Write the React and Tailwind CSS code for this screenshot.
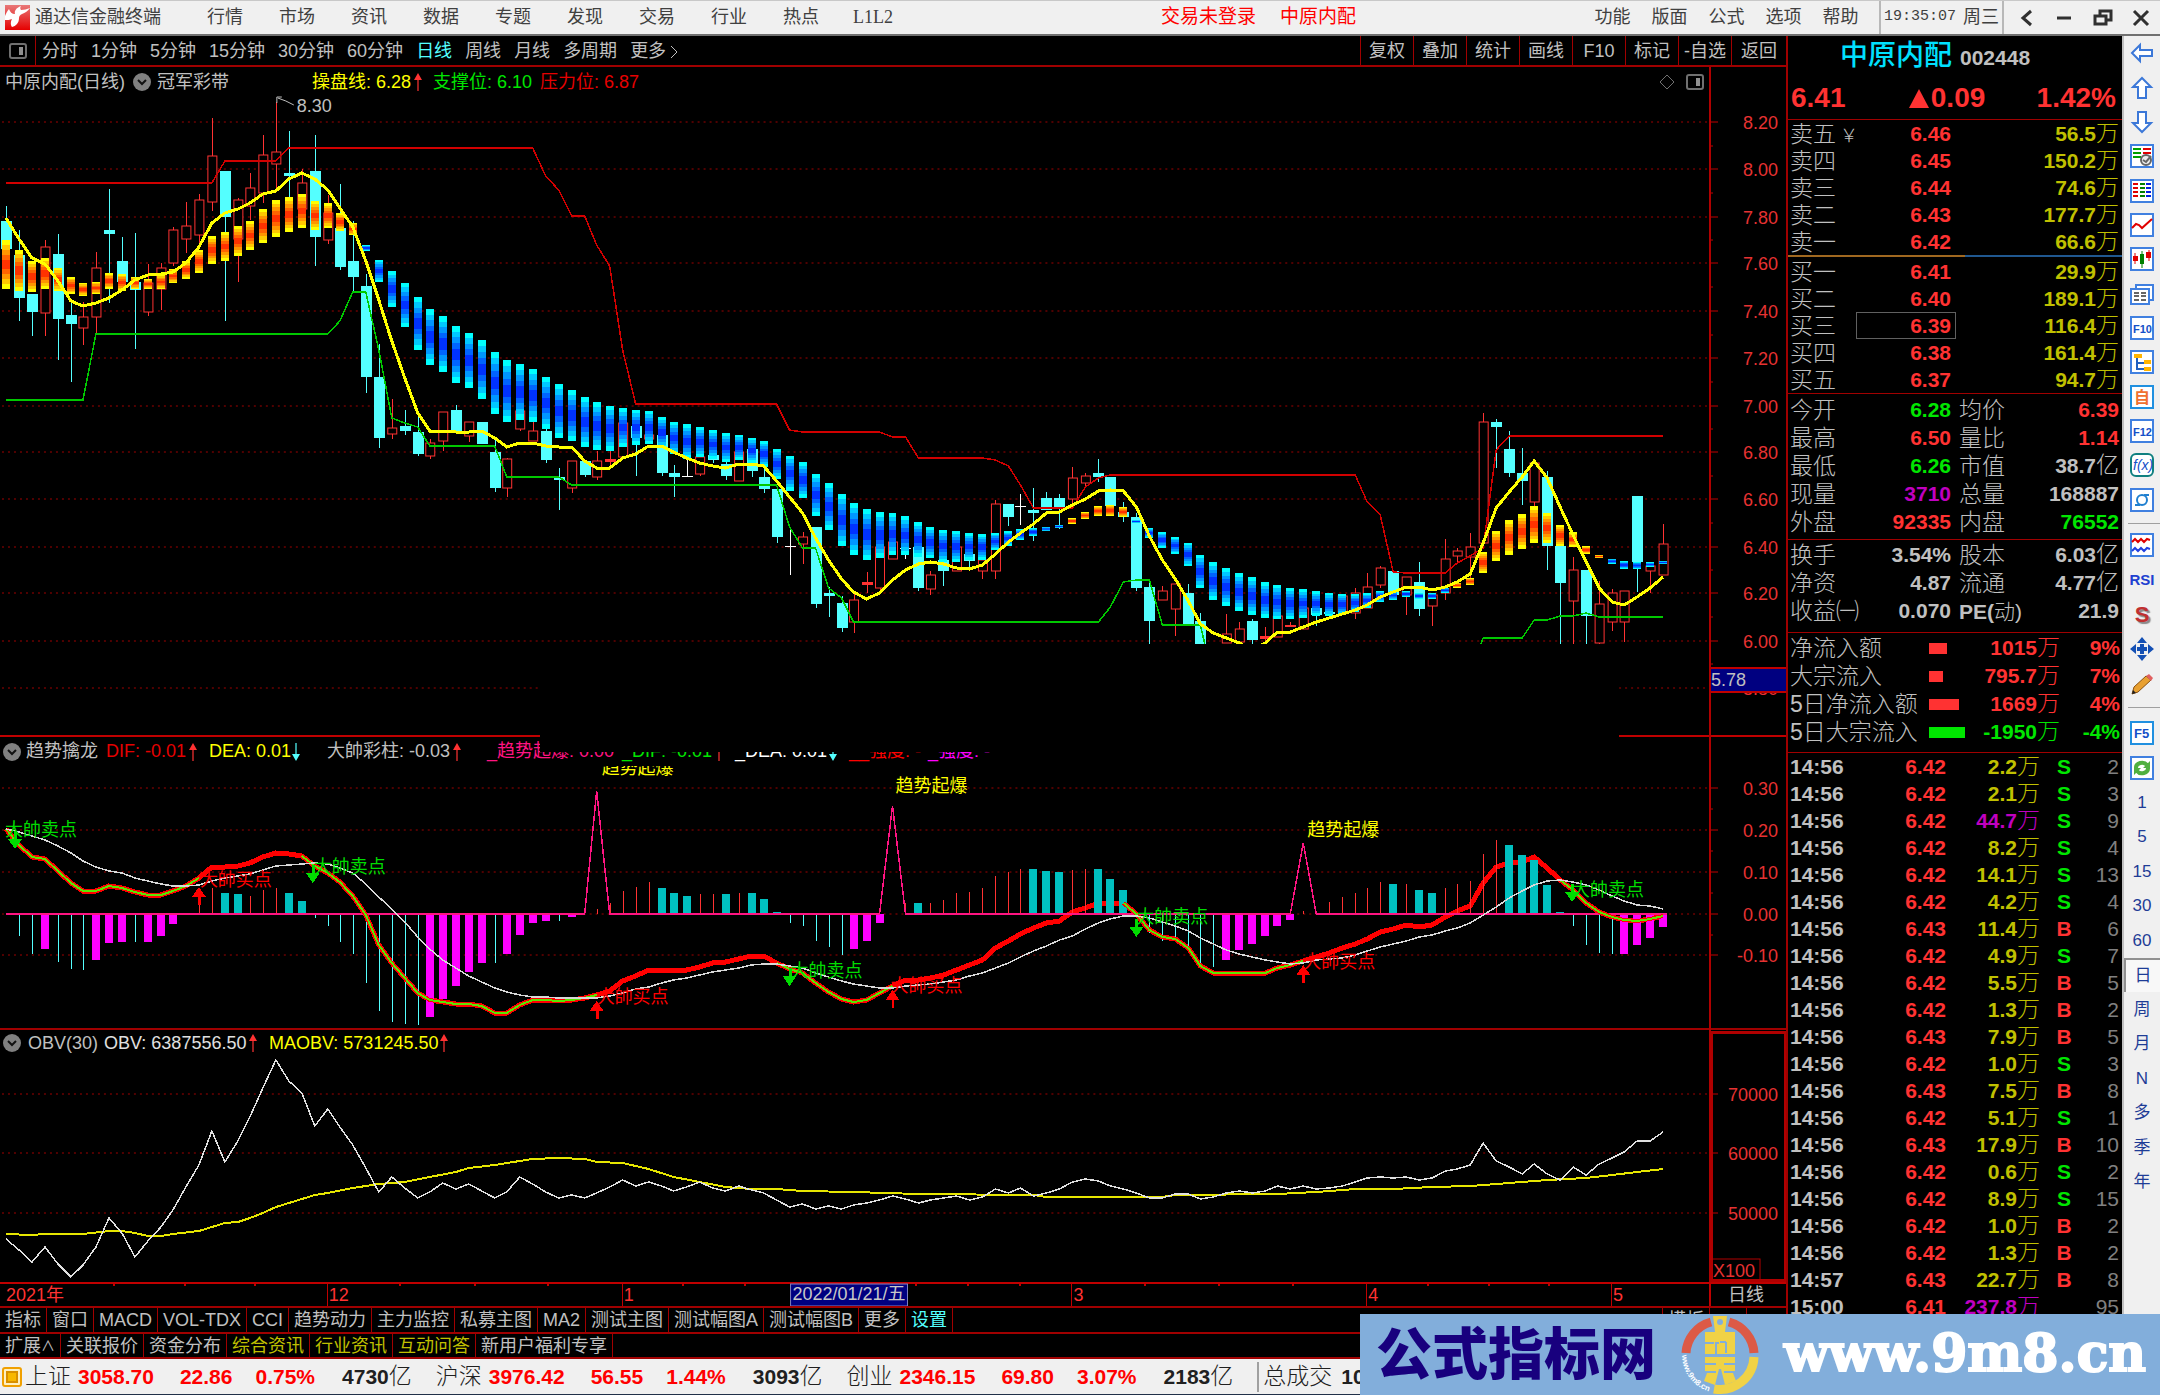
import React, { useState } from 'react';
import clsx from 'clsx';

const STEP = 12.85;
const X0 = 6.3;
const xAt = (i) => Math.round(X0 + STEP * i);

// [kind, high, bodyTop, bodyBottom, low]  r = up, f = up filled, c = down, w = flat
const CANDLES = [
  ['c', 206, 221, 249, 249], ['c', 230, 255, 298, 321], ['c', 294, 294, 312, 336], ['r', 240, 247, 313, 336],
  ['c', 234, 254, 319, 360], ['c', 303, 315, 324, 382], ['r', 302, 317, 328, 345], ['r', 252, 268, 317, 333],
  ['c', 189, 230, 234, 303], ['c', 237, 261, 282, 282], ['c', 233, 282, 290, 349], ['r', 264, 283, 312, 316],
  ['r', 263, 268, 289, 310], ['r', 227, 230, 263, 266], ['r', 202, 226, 239, 253], ['r', 194, 200, 235, 247],
  ['r', 118, 156, 202, 211], ['c', 171, 171, 217, 321], ['r', 198, 200, 239, 282], ['r', 173, 188, 206, 220],
  ['r', 135, 155, 193, 203], ['r', 102, 152, 164, 190], ['c', 131, 173, 176, 197], ['r', 169, 183, 209, 209],
  ['c', 135, 171, 237, 266], ['r', 195, 213, 240, 244], ['c', 184, 228, 267, 270], ['c', 221, 261, 277, 292],
  ['c', 274, 286, 377, 393], ['c', 344, 377, 438, 448], ['r', 399, 428, 434, 439], ['c', 410, 426, 431, 435],
  ['c', 415, 432, 454, 456], ['r', 439, 443, 456, 459], ['r', 412, 412, 441, 451], ['c', 405, 410, 431, 431],
  ['r', 422, 422, 436, 442], ['c', 422, 422, 444, 444], ['c', 437, 452, 488, 492], ['r', 458, 459, 488, 497],
  ['r', 411, 411, 429, 431], ['r', 422, 431, 441, 441], ['c', 428, 431, 460, 463], ['c', 468, 477, 480, 510],
  ['r', 461, 461, 488, 493], ['c', 461, 461, 475, 477], ['r', 451, 461, 477, 480], ['f', 451, 459, 462, 465],
  ['r', 423, 423, 457, 457], ['c', 426, 426, 438, 476], ['r', 435, 435, 439, 439], ['c', 435, 435, 473, 476],
  ['c', 465, 473, 477, 497], ['w', 460, 476, 477, 477], ['r', 457, 457, 474, 476], ['c', 452, 455, 460, 463],
  ['c', 462, 464, 476, 480], ['r', 452, 452, 481, 481], ['c', 449, 449, 471, 477], ['c', 462, 477, 489, 493],
  ['c', 489, 489, 537, 543], ['w', 527, 546, 547, 575], ['r', 532, 537, 544, 564], ['c', 527, 527, 604, 608],
  ['c', 587, 593, 596, 617], ['c', 596, 603, 628, 632], ['r', 593, 600, 622, 633], ['f', 572, 582, 585, 593],
  ['r', 547, 547, 588, 590], ['r', 542, 542, 559, 559], ['w', 547, 548, 549, 559], ['c', 547, 547, 588, 591],
  ['r', 571, 575, 589, 595], ['c', 560, 560, 571, 586], ['r', 547, 547, 571, 571], ['c', 554, 554, 561, 571],
  ['r', 560, 560, 571, 579], ['r', 500, 504, 571, 579], ['c', 504, 504, 517, 526], ['w', 494, 506, 507, 525],
  ['c', 488, 510, 513, 541], ['c', 492, 498, 510, 510], ['c', 494, 498, 508, 529], ['r', 467, 478, 499, 508],
  ['r', 473, 476, 483, 488], ['c', 459, 473, 477, 482], ['c', 477, 477, 506, 513], ['c', 502, 512, 517, 522],
  ['c', 513, 517, 588, 591], ['c', 582, 587, 621, 660], ['r', 586, 591, 600, 600], ['r', 584, 584, 609, 636],
  ['c', 584, 593, 625, 625], ['c', 613, 621, 680, 680], ['c', 660, 662, 680, 680], ['r', 614, 634, 643, 643],
  ['r', 622, 629, 642, 643], ['c', 619, 621, 640, 644], ['f', 627, 636, 639, 643], ['r', 616, 616, 637, 637],
  ['f', 622, 625, 627, 627], ['r', 608, 608, 629, 629], ['c', 608, 608, 615, 626], ['c', 608, 612, 614, 614],
  ['r', 594, 596, 612, 612], ['r', 588, 593, 613, 619], ['r', 573, 587, 608, 608], ['r', 566, 568, 585, 588],
  ['c', 571, 571, 595, 595], ['r', 577, 577, 595, 615], ['c', 562, 582, 609, 616], ['r', 593, 595, 606, 626],
  ['r', 539, 559, 593, 600], ['r', 548, 551, 556, 563], ['r', 533, 547, 557, 580], ['r', 413, 422, 543, 543],
  ['c', 419, 422, 427, 468], ['c', 431, 449, 473, 477], ['c', 448, 473, 481, 505], ['r', 460, 463, 502, 506],
  ['c', 471, 477, 546, 570], ['c', 537, 546, 583, 660], ['r', 557, 570, 601, 660], ['c', 570, 570, 616, 660],
  ['r', 581, 604, 643, 650], ['r', 589, 593, 622, 631], ['r', 591, 591, 622, 642], ['c', 496, 496, 562, 592],
  ['r', 562, 566, 571, 593], ['r', 524, 544, 575, 575],
];

// ribbon [top, bottom] for each day
const RIBBON = [
  [240, 289], [250, 291], [261, 292], [258, 289], [268, 291], [277, 294], [283, 296], [282, 294], [273, 289], [274, 291],
  [277, 289], [279, 289], [275, 289], [269, 283], [261, 279], [250, 273], [236, 264], [232, 261], [226, 256], [221, 250],
  [209, 243], [200, 237], [197, 232], [194, 228], [201, 230], [203, 228], [213, 231], [223, 235], [245, 251], [260, 282],
  [271, 307], [283, 327], [297, 350], [309, 365], [316, 372], [326, 383], [333, 388], [340, 399], [352, 414], [360, 422],
  [364, 420], [369, 422], [377, 429], [384, 438], [390, 441], [397, 447], [402, 450], [406, 451], [408, 447], [410, 445],
  [411, 444], [417, 448], [422, 454], [424, 459], [427, 457], [430, 459], [433, 462], [435, 460], [438, 463], [441, 467],
  [449, 479], [456, 491], [462, 498], [474, 516], [483, 530], [494, 546], [503, 555], [509, 560], [512, 558], [513, 555],
  [516, 555], [522, 557], [527, 558], [530, 562], [531, 562], [533, 560], [534, 560], [533, 550], [531, 546], [529, 540],
  [528, 536], [527, 531], [525, 528], [518, 524], [512, 519], [506, 516], [505, 516], [507, 517], [520, 523], [528, 538],
  [532, 548], [537, 554], [543, 566], [555, 588], [562, 600], [568, 606], [573, 611], [577, 615], [582, 618], [585, 619],
  [588, 619], [589, 618], [591, 616], [593, 616], [594, 615], [594, 612], [593, 608], [591, 602], [591, 600], [591, 597],
  [593, 599], [593, 599], [588, 593], [583, 588], [578, 585], [552, 573], [531, 561], [520, 555], [514, 549], [506, 543],
  [513, 543], [525, 546], [532, 547], [546, 554], [555, 558], [559, 564], [561, 569], [562, 569], [562, 567], [561, 564],
];
const isWarm = (i) => i <= 27 || (i >= 83 && i <= 87) || (i >= 113 && i <= 124);

const TRADE_LINE = [
  218, 239, 258, 264, 281, 301, 306, 303, 298, 290, 280, 275, 274, 272, 263, 247, 223, 213, 209, 203, 194, 191, 179, 173,
  179, 190, 208, 227, 261, 300, 341, 378, 413, 431, 431, 432, 432, 431, 438, 447, 443, 443, 446, 447, 447, 461, 468, 468,
  458, 454, 446, 446, 452, 458, 463, 466, 468, 464, 464, 466, 481, 497, 513, 538, 560, 579, 592, 599, 593, 580, 570, 564,
  562, 564, 568, 569, 565, 554, 542, 533, 524, 513, 512, 505, 499, 491, 490, 491, 507, 536, 560, 579, 601, 624, 633, 638,
  643, 650, 643, 632, 632, 627, 622, 618, 614, 610, 605, 597, 592, 587, 587, 590, 587, 582, 574, 543, 508, 492, 477, 461,
  478, 507, 535, 562, 588, 602, 605, 597, 588, 577,
];
// sparse lines: [day, y]
const PRESSURE = [
  [0, 183], [16, 183], [17, 161], [21, 161], [22, 148], [41, 148], [42, 176], [43, 190], [44, 216], [45, 216], [46, 245],
  [47, 266], [48, 350], [49, 404], [60, 404], [61, 430], [62, 432], [68, 432], [69, 437], [70, 437], [71, 458], [76, 458],
  [77, 460], [78, 466], [79, 485], [80, 508], [83, 508], [84, 487], [85, 478], [86, 475], [105, 475], [106, 502],
  [107, 515], [108, 572], [109, 573], [112, 573], [113, 563], [114, 556], [115, 548], [116, 450], [117, 436], [129, 436],
];
const SUPPORT = [
  [0, 400], [6, 400], [7, 334], [25, 334], [26, 321], [27, 292], [28, 292], [29, 350], [30, 418], [31, 423], [32, 427],
  [33, 446], [38, 446], [39, 477], [43, 477], [44, 485], [60, 485], [61, 527], [62, 548], [63, 548], [64, 588], [65, 598],
  [66, 622], [85, 622], [86, 607], [87, 582], [88, 580], [89, 580], [90, 625], [93, 625], [94, 680], [114, 670],
  [115, 638], [118, 638], [119, 620], [120, 620], [121, 616], [122, 616], [123, 613], [124, 617], [129, 617],
];

// histogram: c thin cyan, t teal bar, r thin red, m magenta bar
const HIST = 'c936 c954 m949 c962 c969 c970 m960 m943 m942 c942 m942 m936 m924 r914 r900 r888 t893 t894 r896 r890 r888 t893 t901 c918 c926 c942 c954 c983 c1011 c1022 c1024 c1025 m1017 m999 m986 m972 m963 c963 m954 m935 m923 m921 c921 m917 r914 r909 r903 r891 r887 r882 t888 t893 t896 r894 r894 t894 r893 t893 t899 t912 c923 c926 c941 c947 c955 m949 m941 m923 r909 r903 t903 r903 r900 r893 r892 r888 r876 r872 r869 t869 t871 t872 r870 r869 t869 t879 t890 c914 c933 c941 c942 c948 c965 c967 m960 m950 m944 m936 m926 m920 r911 r914 r902 r897 r893 r888 r882 t884 r884 t890 t893 r888 r884 r881 r854 r840 t845 t855 t860 t885 t912 c926 c945 c953 c954 m954 m945 m938 m927'
  .split(' ')
  .map((s) => [s[0], Number(s.slice(1))]);

const DEA = [
  829, 832, 836, 840, 846, 853, 861, 867, 871, 873, 878, 881, 884, 886, 886, 885, 881, 878, 876, 874, 870, 866, 865, 864,
  863, 864, 868, 873, 884, 897, 909, 922, 937, 949, 960, 968, 976, 982, 988, 992, 995, 997, 997, 998, 998, 998, 998, 996,
  993, 989, 987, 983, 980, 978, 975, 972, 970, 968, 965, 964, 964, 966, 968, 973, 977, 981, 984, 986, 988, 988, 986, 985,
  984, 982, 980, 976, 973, 968, 963, 957, 951, 946, 940, 936, 929, 923, 919, 916, 916, 918, 922, 926, 931, 938, 944, 950,
  954, 957, 960, 962, 964, 963, 960, 959, 958, 955, 951, 947, 944, 941, 937, 935, 931, 928, 923, 915, 907, 898, 891, 885,
  881, 880, 882, 885, 890, 896, 901, 905, 906, 909,
];
const DIF = [
  829, 845, 857, 859, 871, 883, 891, 891, 886, 888, 892, 895, 895, 891, 886, 878, 867, 867, 866, 863, 857, 853, 854, 856,
  866, 873, 882, 896, 915, 945, 963, 978, 993, 1000, 1002, 1004, 1004, 1006, 1013, 1013, 1005, 1000, 1000, 1001, 1000, 998, 995, 991,
  981, 976, 970, 970, 970, 970, 967, 963, 962, 959, 956, 956, 963, 969, 973, 983, 992, 999, 1002, 1000, 993, 986, 980, 980,
  978, 975, 970, 965, 960, 948, 941, 934, 928, 923, 921, 912, 908, 903, 903, 903, 914, 930, 937, 939, 948, 966, 973, 973,
  973, 973, 973, 968, 965, 961, 957, 953, 948, 944, 939, 932, 929, 925, 927, 925, 917, 911, 906, 883, 867, 863, 862, 857,
  868, 880, 890, 903, 912, 917, 920, 921, 919, 916,
];
const WEAK = [[0, 15], [23, 46], [60, 69], [87, 101], [121, 129]];

const OBV = [
  1239, 1250, 1262, 1247, 1264, 1277, 1265, 1247, 1218, 1233, 1257, 1241, 1227, 1210, 1187, 1165, 1131, 1162, 1141, 1117,
  1088, 1060, 1081, 1093, 1126, 1109, 1127, 1145, 1168, 1192, 1177, 1188, 1198, 1192, 1183, 1189, 1184, 1191, 1198, 1192,
  1177, 1184, 1192, 1198, 1195, 1198, 1193, 1187, 1180, 1186, 1182, 1186, 1191, 1187, 1182, 1188, 1191, 1186, 1190, 1193,
  1200, 1207, 1204, 1209, 1206, 1209, 1205, 1203, 1200, 1196, 1199, 1203, 1200, 1198, 1196, 1200, 1197, 1189, 1193, 1188,
  1196, 1193, 1189, 1182, 1179, 1181, 1186, 1189, 1193, 1198, 1198, 1194, 1194, 1199, 1197, 1193, 1191, 1193, 1191, 1186,
  1189, 1186, 1189, 1188, 1186, 1182, 1178, 1177, 1178, 1177, 1180, 1178, 1171, 1169, 1165, 1143, 1161, 1167, 1174, 1164,
  1174, 1180, 1167, 1175, 1164, 1158, 1152, 1141, 1141, 1132,
];
const MAOBV = [
  [0, 1234], [2, 1235], [3, 1234], [6, 1234], [8, 1231], [9, 1231], [10, 1233], [11, 1236], [12, 1236], [13, 1234],
  [15, 1231], [16, 1227], [17, 1223], [18, 1222], [19, 1218], [20, 1213], [21, 1207], [22, 1203], [24, 1195], [25, 1193],
  [27, 1188], [29, 1184], [31, 1182], [33, 1177], [35, 1172], [36, 1168], [38, 1165], [40, 1161], [41, 1159], [43, 1158],
  [45, 1159], [46, 1162], [48, 1163], [50, 1169], [52, 1177], [54, 1182], [56, 1187], [58, 1189], [60, 1189], [62, 1191],
  [66, 1192], [71, 1194], [80, 1195], [81, 1197], [90, 1197], [91, 1195], [94, 1195], [96, 1194], [99, 1194], [102, 1192],
  [105, 1189], [108, 1189], [111, 1187], [114, 1186], [117, 1183], [120, 1180], [123, 1178], [125, 1175], [127, 1172],
  [129, 1169],
];

const dense = (ys, from = 0, to = ys.length - 1) =>
  ys.slice(from, to + 1).map((y, k) => `${xAt(from + k)},${y}`).join(' ');
const sparse = (pts) => pts.map(([i, y]) => `${xAt(i)},${y}`).join(' ');

const COLORS = { r: '#ff3232', f: '#ff3232', c: '#54ffff', w: '#ffffff', t: '#00c0c0', m: '#ff00ff' };

function Candle({ i, data }) {
  const [kind, high, top, bottom, low] = data;
  const x = xAt(i);
  const color = COLORS[kind];
  const hollow = kind === 'r';
  return (
    <g>
      <rect x={x} y={high} width="1" height={Math.max(low - high, 1)} fill={color} />
      {hollow ? (
        <rect x={x - 4} y={top} width="9" height={Math.max(bottom - top, 2)} fill="#000" stroke={color} />
      ) : (
        <rect x={x - 5} y={top} width="11" height={Math.max(bottom - top, 1)} fill={color} />
      )}
    </g>
  );
}

function RibbonGradient({ id, colors }) {
  const cuts = [0, 10, 20, 30, 40];
  const stops = [];
  cuts.forEach((c, k) => {
    stops.push([c, colors[k]], [k < 4 ? cuts[k + 1] : 60, colors[k]]);
  });
  for (let k = 3; k >= 0; k--) stops.push([90 - cuts[k], colors[k]], [100 - cuts[k], colors[k]]);
  return (
    <linearGradient id={id} x1="0" y1="0" x2="0" y2="1">
      {stops.map(([o, c], k) => (
        <stop key={k} offset={`${o}%`} stopColor={c} />
      ))}
    </linearGradient>
  );
}

function GridLine({ y, label, short }) {
  return (
    <g>
      {short ? (
        <path d={`M2 ${y}H540M1620 ${y}H1708`} stroke="#a00000" strokeDasharray="2 4" />
      ) : (
        <path d={`M2 ${y}H1708`} stroke="#a00000" strokeDasharray="2 4" />
      )}
      <path d={`M1711 ${y}H1719`} stroke="#c00000" />
      {label && (
        <text x="1779" y={y + 7} textAnchor="end" fill="#e63232" fontSize="18">{label}</text>
      )}
    </g>
  );
}

function MinorTicks({ ys }) {
  return <path d={ys.map((y) => `M1711 ${y}H1714`).join('')} stroke="#c00000" />;
}

function Chart({ top, height, grow, children, header }) {
  return (
    <div className={clsx('relative min-h-0', grow)}>
      <svg
        className="block h-full w-full"
        viewBox={`0 ${top} 1787 ${height}`}
        preserveAspectRatio="none"
        shapeRendering="crispEdges"
        fill="none"
      >
        {children}
        <path d={`M1710.5 ${top}V${top + height}`} stroke="#b00000" strokeWidth="2" />
      </svg>
      {header}
    </div>
  );
}

function Toggle() {
  return (
    <button className="flex size-[18px] items-center justify-center rounded-full bg-[#808080]" aria-label="指标菜单">
      <svg viewBox="0 0 10 10" className="size-2.5" fill="none" stroke="#111" strokeWidth="2">
        <path d="M1 3l4 4 4-4" />
      </svg>
    </button>
  );
}

function Trend({ down }) {
  return down ? (
    <svg viewBox="0 0 8 20" className="h-5 w-2" fill="#54ffff"><path d="M3.4 1h1.2v11H8L4 19 0 12h3.4z" /></svg>
  ) : (
    <svg viewBox="0 0 8 20" className="h-5 w-2" fill="#ff3232"><path d="M3.4 19h1.2V8H8L4 1 0 8h3.4z" /></svg>
  );
}

function PriceChart() {
  const levels = [122, 169, 217, 263, 311, 358, 406, 452, 499, 547, 593, 641];
  return (
    <Chart
      top={67}
      height={670}
      grow="flex-[670]"
      header={
        <>
          <div className="absolute inset-x-0 top-0 flex h-[30px] items-center pl-[5px]">
            <span className="w-[128px]">中原内配(日线)</span>
            <Toggle />
            <span className="ml-1.5 w-[155px]">冠军彩带</span>
            <span className="text-[#ffff00]">操盘线: 6.28</span>
            <span className="mx-[3px]"><Trend /></span>
            <span className="ml-2 text-[#00e600]">支撑位: 6.10</span>
            <span className="ml-2 text-[#e60000]">压力位: 6.87</span>
          </div>
          <div className="absolute top-1.5 right-[82px] flex items-center gap-2.5">
            <svg viewBox="0 0 18 18" className="size-[18px]" fill="none" stroke="#707070"><path d="M9 2l7 7-7 7-7-7z" /></svg>
            <PanelIcon />
          </div>
        </>
      }
    >
      <defs>
        <RibbonGradient id="warm" colors={['#ffff00', '#ffc800', '#ff9600', '#ff6400', '#ff3200']} />
        <RibbonGradient id="cool" colors={['#00ffff', '#00c8ff', '#0096ff', '#0064ff', '#0032ff']} />
        <clipPath id="price-clip"><rect x="0" y="67" width="1710" height="577" /></clipPath>
      </defs>
      {levels.map((y, k) => (
        <GridLine key={y} y={y} label={(8.2 - k * 0.2).toFixed(2)} />
      ))}
      <GridLine y={688} label="5.80" short />
      <MinorTicks ys={[146, 193, 240, 287, 335, 382, 429, 476, 523, 570, 617, 664]} />
      <g clipPath="url(#price-clip)">
        {CANDLES.map((c, i) => (
          <Candle key={i} i={i} data={c} />
        ))}
        {RIBBON.map(([a, b], i) => (
          <rect key={i} x={xAt(i) - 4} y={a} width="8" height={b - a} fill={isWarm(i) ? 'url(#warm)' : 'url(#cool)'} />
        ))}
        <polyline points={sparse(PRESSURE)} stroke="#d20000" strokeWidth="1.5" />
        <polyline points={sparse(SUPPORT)} stroke="#00c800" strokeWidth="1.5" />
        <polyline points={dense(TRADE_LINE)} stroke="#ffff00" strokeWidth="3" />
      </g>
      <path d="M277 103V97H282M278 98L286 101L294 105" stroke="#c0c0c0" />
      <text x="297" y="112" fill="#c0c0c0" fontSize="18">8.30</text>
      <rect x="1711" y="668" width="76" height="24" fill="#000080" />
      <path d="M1711 668H1787M1711 692H1787" stroke="#c00000" strokeWidth="2" />
      <text x="1712" y="686" fill="#c0c0c0" fontSize="18">5.78</text>
      <path d="M0 736H540M1620 736H1787" stroke="#c00000" strokeWidth="2" />
    </Chart>
  );
}

const SELL = [[5, 836, 15, 849], [314, 873, 313, 883], [791, 977, 790, 986], [1137, 923, 1137, 937], [1573, 896, 1573, 902]];
const BUY = [[200, 886, 199, 887], [597, 1003, 597, 1001], [891, 992, 893, 990], [1304, 968, 1304, 965]];

function TrendChart() {
  const grid = [[788, '0.30'], [830, '0.20'], [872, '0.10'], [914, '0.00'], [955, '-0.10']];
  const spikes = [[46, 791], [69, 806], [101, 843]];
  let base = `M${xAt(0)} 914`;
  spikes.forEach(([i, y]) => {
    base += `H${xAt(i - 1)}L${xAt(i)} ${y}L${xAt(i + 1)} 914`;
  });
  base += `H${xAt(129) + 4}`;
  return (
    <Chart
      top={737}
      height={293}
      grow="flex-[293]"
      header={
        <div className="absolute inset-x-0 top-0 mr-[77px] flex h-[29px] items-center bg-black pl-[3px] whitespace-pre">
          <Toggle />
          <span className="ml-[5px] w-20">趋势擒龙</span>
          <span className="w-[83px] text-[#e60000]">DIF: -0.01</span>
          <Trend />
          <span className="ml-3 w-[83px] text-[#ffff00]">DEA: 0.01</span>
          <Trend down />
          <span className="ml-[27px] w-[126px]">大帥彩柱: -0.03</span>
          <Trend />
          <span className="ml-[26px] w-[135px] text-[#ff1482]">_趋势起爆: 0.00</span>
          <span className="w-[93px] text-[#00e600]">_DIF: -0.01</span>
          <Trend />
          <span className="ml-3 w-[94px] text-white">_DEA: 0.01</span>
          <Trend down />
          <span className="ml-3 w-[79px] text-[#ff0000]">__强度: -</span>
          <span className="text-[#ff00ff]">_强度: -</span>
          <div className="absolute top-0 right-[90px] left-[540px] h-[15px] bg-black" />
        </div>
      }
    >
      {grid.map(([y, label]) => (
        <GridLine key={y} y={y} label={label} />
      ))}
      <MinorTicks ys={[809, 851, 893, 935]} />
      <polyline points={dense(DIF)} stroke="#ff0000" strokeWidth="5" />
      {HIST.map(([kind, y], k) => {
        const x = xAt(k + 1);
        const wide = kind === 't' || kind === 'm';
        return (
          <rect
            key={k}
            x={wide ? x - 4 : x}
            y={Math.min(y, 914)}
            width={wide ? 8 : 1}
            height={Math.abs(914 - y)}
            fill={COLORS[kind]}
          />
        );
      })}
      <path d={base} stroke="#ff1482" strokeWidth="1.5" />
      {WEAK.map(([a, b]) => (
        <g key={a}>
          <polyline points={dense(DIF, a, b)} stroke="#ff0000" strokeWidth="4" />
          <polyline points={dense(DIF, a, b)} stroke="#5ae600" strokeWidth="2" />
        </g>
      ))}
      <polyline points={dense(DEA)} stroke="#d8d8d8" strokeWidth="1.5" />
      {SELL.map(([tx, ty, ax, ay]) => (
        <g key={tx} fill="#00dc00">
          <path d={`M${ax - 1} ${ay - 18}h3v8h5l-7 10-7-10h6z`} />
          <text x={tx} y={ty} fontSize="18">大帥卖点</text>
        </g>
      ))}
      {BUY.map(([tx, ty, ax, ay]) => (
        <g key={tx} fill="#ff0000">
          <path d={`M${ax - 1} ${ay + 18}h3v-8h5l-7-10-7 10h6z`} />
          <text x={tx} y={ty} fontSize="18">大帥买点</text>
        </g>
      ))}
      <g fill="#ffff00" fontSize="18">
        <text x="602" y="774">趋势起爆</text>
        <text x="896" y="792">趋势起爆</text>
        <text x="1308" y="836">趋势起爆</text>
      </g>
      <path d="M0 1029H1787" stroke="#a00000" strokeWidth="2" />
    </Chart>
  );
}

function ObvChart() {
  return (
    <Chart
      top={1030}
      height={252}
      grow="flex-[252]"
      header={
        <div className="absolute top-0 left-0 flex h-[26px] items-center pl-[3px] whitespace-pre">
          <Toggle />
          <span className="ml-[7px] w-[76px]">OBV(30)</span>
          <span className="w-[145px] text-[#e0e0e0]">OBV: 6387556.50</span>
          <Trend />
          <span className="ml-3 w-[171px] text-[#ffff00]">MAOBV: 5731245.50</span>
          <Trend />
        </div>
      }
    >
      <GridLine y={1094} label="70000" />
      <GridLine y={1153} label="60000" />
      <GridLine y={1213} label="50000" />
      <MinorTicks ys={[1124, 1183, 1243]} />
      <polyline points={sparse(MAOBV)} stroke="#e6e600" strokeWidth="2" />
      <polyline points={dense(OBV)} stroke="#e0e0e0" strokeWidth="1.5" />
      <rect x="1712" y="1032" width="74" height="248" stroke="#b00000" strokeWidth="3" />
      <rect x="1712" y="1259" width="49" height="21" stroke="#b00000" />
      <text x="1714" y="1277" fill="#e63232" fontSize="18">X100</text>
    </Chart>
  );
}

function DateAxis() {
  const small = [114, 185, 255, 400, 475, 548, 683, 745, 917, 969, 1021, 1146, 1220, 1294, 1429, 1490, 1550];
  const months = [[327, '12'], [622, '1'], [1072, '3'], [1367, '4'], [1612, '5']];
  return (
    <svg className="block h-6 w-full shrink-0" viewBox="0 0 1787 24" preserveAspectRatio="none" shapeRendering="crispEdges">
      <path d={`M0 1H1787M1711 1V24${small.map((x) => `M${x} 1V4`).join('')}`} stroke="#c00000" strokeWidth="2" />
      <g fill="#ff3232" fontSize="18">
        <text x="6" y="19">2021年</text>
        {months.map(([x, m]) => (
          <g key={x}>
            <rect x={x} y="1" width="1" height="23" fill="#c00000" />
            <text x={x + 2} y="19">{m}</text>
          </g>
        ))}
      </g>
      <rect x="791" y="2" width="117" height="22" fill="#000080" stroke="#8080c0" />
      <text x="793" y="18" fill="#c8c8c8" fontSize="18">2022/01/21/五</text>
      <text x="1729" y="19" fill="#c0c0c0" fontSize="18">日线</text>
    </svg>
  );
}

function PanelIcon() {
  return (
    <svg viewBox="0 0 18 18" className="size-[18px]" fill="none" stroke="#707070" strokeWidth="2">
      <rect x="1" y="2" width="16" height="14" rx="2" />
      <path d="M12 5v8" stroke="#909090" strokeWidth="4" />
    </svg>
  );
}

function TitleBar() {
  const menus = ['行情', '市场', '资讯', '数据', '专题', '发现', '交易', '行业', '热点'];
  return (
    <header className="flex h-9 shrink-0 items-center border-t border-b-2 border-t-[#c8c8c8] border-b-[#707070] bg-[#f0f0f0] pl-[5px] text-[#404040]">
      <svg viewBox="0 0 25 25" className="size-[25px]">
        <defs>
          <linearGradient id="logo" x1="0" y1="0" x2="0" y2="1">
            <stop offset="0" stopColor="#e87878" />
            <stop offset="1" stopColor="#e60000" />
          </linearGradient>
        </defs>
        <rect width="25" height="25" fill="url(#logo)" />
        <path d="M16 1C11 3 9 6 10 9 7 9 5 7 4 4 2 6 1 9 0 11v4c2 0 5 0 7-1-1 2-2 5 0 8 4-1 7-4 7-9 0-2 1-3 3-4 3-1 6-3 8-6-3 1-6 2-9 2-1-1-1-3 0-4z" fill="#fff" />
      </svg>
      <span className="ml-[5px] mr-7">通达信金融终端</span>
      <nav className="flex">
        {menus.map((m) => (
          <button key={m} className="w-[72px]">{m}</button>
        ))}
        <button className="w-[72px] font-['Liberation_Serif',serif]">L1L2</button>
      </nav>
      <div className="flex flex-1 justify-center gap-6 pl-6 text-[19px] text-[#ff0000]">
        <button>交易未登录</button>
        <button>中原内配</button>
      </div>
      <nav className="flex">
        {['功能', '版面', '公式', '选项', '帮助'].map((m) => (
          <button key={m} className="w-[57px]">{m}</button>
        ))}
      </nav>
      <div className="ml-[10px] flex h-full w-[125px] items-center justify-between border-x-2 border-[#b8b8b8] px-[3px]">
        <time className="font-['Liberation_Mono',monospace] text-[15px]">19:35:07</time>
        <span>周三</span>
      </div>
      <div className="flex w-[156px] items-center justify-around pl-1">
        <button aria-label="后退"><svg viewBox="0 0 18 18" className="size-[18px]" fill="none" stroke="#303030" strokeWidth="3"><path d="M13 2L5 9l8 7" /></svg></button>
        <button aria-label="最小化"><svg viewBox="0 0 18 18" className="size-[18px]" fill="none" stroke="#303030" strokeWidth="3"><path d="M2 9h14" /></svg></button>
        <button aria-label="还原"><svg viewBox="0 0 20 20" className="size-5" fill="none" stroke="#303030" strokeWidth="3"><path d="M2 8h11v8H2zM7 7V3h11v9h-5" /></svg></button>
        <button aria-label="关闭"><svg viewBox="0 0 18 18" className="size-[18px]" fill="none" stroke="#303030" strokeWidth="3"><path d="M2 2l14 14M16 2L2 16" /></svg></button>
      </div>
    </header>
  );
}

function PeriodBar() {
  const [period, setPeriod] = useState('日线');
  const periods = ['分时', '1分钟', '5分钟', '15分钟', '30分钟', '60分钟', '日线', '周线', '月线', '多周期'];
  const tools = ['复权', '叠加', '统计', '画线', 'F10', '标记', '-自选', '返回'];
  return (
    <div className="flex h-[31px] shrink-0 items-center border-b-2 border-[#a00000]">
      <button className="flex h-full w-9 items-center justify-center border-r border-[#a00000]" aria-label="侧栏"><PanelIcon /></button>
      <div className="ml-1.5 flex gap-[13px] pt-0.5">
        {periods.map((p) => (
          <button key={p} onClick={() => setPeriod(p)} className={clsx(p === period && 'text-[#54ffff]')}>{p}</button>
        ))}
        <button className="flex items-center gap-1">
          更多
          <svg viewBox="0 0 8 16" className="h-4 w-2" fill="none" stroke="currentColor"><path d="M1 2l6 6-6 6" /></svg>
        </button>
      </div>
      <div className="ml-auto flex h-full">
        {tools.map((t) => (
          <button key={t} className="w-[53px] border-l border-[#a00000] pt-0.5 last:w-[55px]">{t}</button>
        ))}
      </div>
    </div>
  );
}

function BottomTabs() {
  const row1 = ['指标', '窗口', 'MACD', 'VOL-TDX', 'CCI', '趋势动力', '主力监控', '私募主图', 'MA2', '测试主图', '测试幅图A', '测试幅图B', '更多', '设置'];
  const row2 = ['关联报价', '资金分布', '综合资讯', '行业资讯', '互动问答', '新用户福利专享'];
  return (
    <>
      <div className="flex h-[26px] shrink-0 border-t-2 border-[#a00000]">
        {row1.map((t) => (
          <button key={t} className={clsx('border-r border-[#a00000] px-[5px] leading-6', t === '设置' && 'text-[#54ffff]')}>{t}</button>
        ))}
        <div className="ml-auto flex">
          <button className="border-x border-[#a00000] px-[5px] leading-6">模板</button>
          <button className="w-[37px] border-r border-[#a00000] leading-6">+</button>
          <button className="w-[39px] leading-6">-</button>
        </div>
      </div>
      <div className="flex h-[27px] shrink-0 border-y-2 border-[#a00000]">
        <button className="flex items-center border-r border-[#a00000] px-[5px] leading-6">
          扩展<span className="text-[14px]">∧</span>
        </button>
        {row2.map((t, i) => (
          <button key={t} className={clsx('border-r border-[#a00000] px-[5px] leading-6', i > 1 && i < 5 && 'text-[#c0c000]')}>{t}</button>
        ))}
      </div>
    </>
  );
}

const ASKS = [['卖五', '6.46', '56.5万'], ['卖四', '6.45', '150.2万'], ['卖三', '6.44', '74.6万'], ['卖二', '6.43', '177.7万'], ['卖一', '6.42', '66.6万']];
const BIDS = [['买一', '6.41', '29.9万'], ['买二', '6.40', '189.1万'], ['买三', '6.39', '116.4万'], ['买四', '6.38', '161.4万'], ['买五', '6.37', '94.7万']];

const RED = 'text-[#ff3232]';
const GREEN = 'text-[#00e600]';
const YELLOW = 'text-[#c0c000]';
const PURPLE = 'text-[#c000c0]';

// Digits are bold, the unit after them stays thin
function Value({ children }) {
  const [, num, unit] = children.match(/^([^万亿]*)(.*)$/);
  return (
    <>
      <span className="font-bold">{num}</span>
      {unit && <span className="text-[23px] leading-none font-light">{unit}</span>}
    </>
  );
}

function DepthTable({ rows }) {
  return (
    <table className="w-full table-fixed">
      <tbody>
        {rows.map(([label, price, vol]) => (
          <tr key={label} className="h-[27px]">
            <th scope="row" className="w-[66px] text-left text-[23px] leading-[26px] font-light whitespace-nowrap">
              {label}
              {label === '卖五' && <span className="ml-1 text-[18px] leading-none">￥</span>}
            </th>
            <td className={clsx('w-[100px] pr-1', RED)}>
              <div className={clsx('border text-right leading-[25px]', price === '6.39' ? '-mr-1 border-[#606060] pr-1' : 'border-transparent')}>
                <Value>{price}</Value>
              </div>
            </td>
            <td className={clsx('pr-px text-right leading-[26px]', YELLOW)}><Value>{vol}</Value></td>
          </tr>
        ))}
      </tbody>
    </table>
  );
}

const STATS = [
  ['今开', '6.28', GREEN, '均价', '6.39', RED],
  ['最高', '6.50', RED, '量比', '1.14', RED],
  ['最低', '6.26', GREEN, '市值', '38.7亿', ''],
  ['现量', '3710', PURPLE, '总量', '168887', ''],
  ['外盘', '92335', RED, '内盘', '76552', GREEN],
];
const FUNDAMENTALS = [
  ['换手', '3.54%', '', '股本', '6.03亿', ''],
  ['净资', '4.87', '', '流通', '4.77亿', ''],
  ['收益㈠', '0.070', '', 'PE(动)', '21.9', ''],
];

function StatTable({ rows }) {
  return (
    <table className="w-full">
      <tbody>
        {rows.map(([a, av, ac, b, bv, bc]) => (
          <tr key={a} className="h-[28px] leading-[26px]">
            <th scope="row" className="text-left text-[23px] font-light">{a}</th>
            <td className={clsx('w-[90px] text-right', ac)}><Value>{av}</Value></td>
            <th scope="row" className="w-[80px] pl-2 text-left text-[23px] font-light">
              {b.startsWith('PE') ? <span className="text-[21px] leading-none whitespace-nowrap"><span className="font-bold">PE(</span>动)</span> : b}
            </th>
            <td className={clsx('w-[89px] pr-px text-right', bc)}><Value>{bv}</Value></td>
          </tr>
        ))}
      </tbody>
    </table>
  );
}

const FLOWS = [
  ['净流入额', 18, '1015万', '9%', true],
  ['大宗流入', 14, '795.7万', '7%', true],
  ['5日净流入额', 30, '1669万', '4%', true],
  ['5日大宗流入', 36, '-1950万', '-4%', false],
];

const TICKS = [
  ['14:56', '6.42', '2.2万', 'S', 2], ['14:56', '6.42', '2.1万', 'S', 3], ['14:56', '6.42', '44.7万', 'S', 9],
  ['14:56', '6.42', '8.2万', 'S', 4], ['14:56', '6.42', '14.1万', 'S', 13], ['14:56', '6.42', '4.2万', 'S', 4],
  ['14:56', '6.43', '11.4万', 'B', 6], ['14:56', '6.42', '4.9万', 'S', 7], ['14:56', '6.42', '5.5万', 'B', 5],
  ['14:56', '6.42', '1.3万', 'B', 2], ['14:56', '6.43', '7.9万', 'B', 5], ['14:56', '6.42', '1.0万', 'S', 3],
  ['14:56', '6.43', '7.5万', 'B', 8], ['14:56', '6.42', '5.1万', 'S', 1], ['14:56', '6.43', '17.9万', 'B', 10],
  ['14:56', '6.42', '0.6万', 'S', 2], ['14:56', '6.42', '8.9万', 'S', 15], ['14:56', '6.42', '1.0万', 'B', 2],
  ['14:56', '6.42', '1.3万', 'B', 2], ['14:57', '6.43', '22.7万', 'B', 8], ['15:00', '6.41', '237.8万', '', 95],
];

function QuotePanel() {
  return (
    <aside className="w-[336px] shrink-0 overflow-hidden border-l-2 border-[#a00000] text-[21px] [&>section]:border-b [&>section]:border-[#a00000] [&>section]:px-0.5">
      <section className="h-[84px] pt-0.5">
        <h1 className="flex h-[42px] items-baseline gap-2 pl-[50px] text-[28px] leading-9 font-medium text-[#00e0ff]">
          中原内配 <span className="text-[21px] font-bold text-[#c0c0c0]">002448</span>
        </h1>
        <div className={clsx('flex items-center justify-between pr-1 pl-px text-[28px] leading-9 font-bold', RED)}>
          <span>6.41</span>
          <span className="flex items-center pl-3">
            <svg viewBox="0 0 20 19" className="mr-0.5 h-[19px] w-5" fill="currentColor"><path d="M10 0l10 19H0z" /></svg>
            0.09
          </span>
          <span>1.42%</span>
        </div>
      </section>
      <div className="px-0.5"><DepthTable rows={ASKS} /></div>
      <div className="flex h-0.5"><span className="w-[53%] bg-[#a06820]" /><span className="flex-1 bg-[#205890]" /></div>
      <section className="pt-px"><DepthTable rows={BIDS} /></section>
      <section className="pt-0.5 pb-[3px]"><StatTable rows={STATS} /></section>
      <section className="pt-px pb-[7px]"><StatTable rows={FUNDAMENTALS} /></section>
      <section className="pt-px pb-[6px]">
        <table className="w-full table-fixed">
          <tbody>
            {FLOWS.map(([label, w, amount, pct, up]) => (
              <tr key={label} className={clsx('h-[28px] leading-[26px]', up ? RED : GREEN)}>
                <th scope="row" className="w-[139px] text-left text-[23px] font-light whitespace-nowrap text-[#c0c0c0]">{label}</th>
                <td className="w-10"><div className="h-[11px] bg-current" style={{ width: w }} /></td>
                <td className="w-[91px] text-right whitespace-nowrap"><Value>{amount}</Value></td>
                <td className="text-right font-bold">{pct}</td>
              </tr>
            ))}
          </tbody>
        </table>
      </section>
      <table className="w-full table-fixed">
        <tbody>
          {TICKS.map(([time, price, vol, side, n], i) => (
            <tr key={i} className="h-[27px] leading-[26px]">
              <td className="w-[70px] pl-0.5 font-bold">{time}</td>
              <td className={clsx('w-[88px] text-right font-bold', RED)}>{price}</td>
              <td className={clsx('w-[94px] text-right', parseFloat(vol) > 40 ? PURPLE : YELLOW)}><Value>{vol}</Value></td>
              <td className={clsx('w-[48px] text-center font-bold', side === 'S' ? GREEN : RED)}>{side}</td>
              <td className="pr-[3px] text-right text-[#808080]">{n}</td>
            </tr>
          ))}
        </tbody>
      </table>
    </aside>
  );
}

function Box({ children, color = '#4080e0' }) {
  return (
    <svg viewBox="0 0 24 24" className="size-6" fill="none">
      <rect x="1" y="1" width="22" height="22" fill="#fff" stroke={color} strokeWidth="2" />
      {children}
    </svg>
  );
}

const hollow = { fill: '#fff', stroke: '#3c78d8', strokeWidth: 2 };
const SIDE_ICONS = [
  <svg viewBox="0 0 24 24" className="size-6" {...hollow}><path d="M2 12l8-8v5h12v6H10v5z" /></svg>,
  <svg viewBox="0 0 24 24" className="size-6" {...hollow}><path d="M12 2l9 9h-5v11H8V11H3z" /></svg>,
  <svg viewBox="0 0 24 24" className="size-6" {...hollow}><path d="M12 22l9-9h-5V2H8v11H3z" /></svg>,
  <Box><path d="M3 5h8M3 9h8M3 13h8" stroke="#00a000" strokeWidth="2" /><path d="M13 5h8M13 9h8" stroke="#e00000" strokeWidth="2" /><circle cx="16" cy="16" r="5" fill="#eee" stroke="#666" strokeWidth="2" /><path d="M13 16l3 2 5-6" stroke="#666" strokeWidth="2" /></Box>,
  <Box><path d="M3 5h5M3 9h5M3 13h5M3 17h5" stroke="#e00000" strokeWidth="2" /><path d="M10 5h5M10 9h5M10 13h5M10 17h5" stroke="#008000" strokeWidth="2" /><path d="M16 5h5M16 9h5M16 13h5M16 17h5" stroke="#0020e0" strokeWidth="2" /></Box>,
  <Box><path d="M2 15l4-4 3 1 3 3 10-9" stroke="#e00000" strokeWidth="2" /></Box>,
  <Box><path d="M5 6v11M19 3v11" stroke="#e00000" /><path d="M12 4v17" stroke="#008000" /><path d="M3 9h5v5H3zM16 5h5v6h-5z" fill="#e00000" /><path d="M10 7h4v10h-4z" fill="#008000" /></Box>,
  <svg viewBox="0 0 24 24" className="size-6" fill="#fff" stroke="#4080e0" strokeWidth="2"><path d="M6 3h17v15H6z" /><path d="M1 7h18v15H1z" /><path d="M4 11h5M4 14h5M4 18h5M11 11h5M11 14h5M11 18h5" stroke="#666" /></svg>,
  <Box><text x="3" y="17" fontSize="11" fill="#1450c8" fontWeight="bold">F10</text></Box>,
  <Box><path d="M7 8v11h7M7 13h7" stroke="#2060c0" strokeWidth="2" /><path d="M4 4h8v4H4zM14 10h7v4h-7zM14 17h7v4h-7z" fill="#ffb400" /></Box>,
  <Box color="#2090e0"><text x="4" y="18" fontSize="16" fill="#f07030" fontWeight="bold">自</text></Box>,
  <Box><text x="3" y="17" fontSize="11" fill="#1450c8" fontWeight="bold">F12</text></Box>,
  <svg viewBox="0 0 24 24" className="size-6" fill="none"><rect x="1" y="1" width="22" height="22" rx="5" fill="#fff" stroke="#108080" strokeWidth="2" /><text x="3" y="17" fontSize="14" fill="#1450c8" fontStyle="italic">f(x)</text></svg>,
  <Box><circle cx="12" cy="12" r="5" stroke="#2080d0" strokeWidth="2" /><path d="M14 7h5M5 17h5" stroke="#2080d0" strokeWidth="2" /></Box>,
];
const DRAW_ICONS = [
  <Box><path d="M2 9l3-3 3 3 3-3 3 3 3-3 3 1" stroke="#e00000" strokeWidth="2" /><path d="M2 18l3-3 3 3 3-3 3 3 3-3 3 1" stroke="#2040e0" strokeWidth="2" /></Box>,
  <span className="text-[15px] font-bold text-[#2040d0]">RSI</span>,
  <span className="text-[22px] font-bold text-[#c03030] [text-shadow:2px_2px_1px_#888]">S</span>,
  <svg viewBox="0 0 24 24" className="size-6" fill="#1450b4"><path d="M12 0l5 6H7zM12 24l5-6H7zM0 12l6-5v10zM24 12l-6-5v10zM10 7h4v3h3v4h-3v3h-4v-3H7v-4h3z" /></svg>,
  <svg viewBox="0 0 24 24" className="size-6"><path d="M2 22l2-7L16 4l5 4L8 20z" fill="#e8a030" stroke="#885010" /><path d="M16 4l3-2 4 4-2 3z" fill="#e06060" /><path d="M2 22l1-4 3 3z" fill="#222" /></svg>,
];
const PERIOD_KEYS = [
  <Box color="#2090e0"><text x="4" y="17" fontSize="13" fill="#1450c8" fontWeight="bold">F5</text></Box>,
  <Box><path d="M6 12a6 5 0 0 1 11-3M18 12a6 5 0 0 1-11 3" stroke="#50b040" strokeWidth="4" /><path d="M20 5v7h-7zM4 19v-7h7z" fill="#50b040" /></Box>,
  '1', '5', '15', '30', '60', '日', '周', '月', 'N', '多', '季', '年',
];

function SideBar() {
  return (
    <nav className="flex w-[38px] shrink-0 flex-col border-l-2 border-[#c0c0c0] bg-[#f0f0f0] text-[17px] text-[#1e3c96]">
      <div className="grid h-[481px] auto-rows-fr">
        {SIDE_ICONS.map((icon, i) => (
          <button key={i} className="flex items-center justify-center" aria-label={`工具${i + 1}`}>{icon}</button>
        ))}
      </div>
      <hr className="mt-1.5 mb-1 ml-1 border-[#a0a0a0]" />
      <div className="grid h-[173px] auto-rows-fr">
        {DRAW_ICONS.map((icon, i) => (
          <button key={i} className="flex items-center justify-center" aria-label={`画线${i + 1}`}>{icon}</button>
        ))}
      </div>
      <hr className="mt-1.5 mb-2 ml-1 border-[#a0a0a0]" />
      <div className="grid h-[483px] auto-rows-fr">
        {PERIOD_KEYS.map((k, i) => (
          <button key={i} className={clsx('flex items-center justify-center', k === '日' && 'border-t-2 border-l-2 border-[#909090] bg-[#f8f8f8]')}>
            {k}
          </button>
        ))}
      </div>
    </nav>
  );
}

const INDICES = [
  ['上证', '3058.70', '22.86', '0.75%', '4730'],
  ['沪深', '3976.42', '56.55', '1.44%', '3093'],
  ['创业', '2346.15', '69.80', '3.07%', '2183'],
];

function StatusBar() {
  return (
    <footer className="flex h-9 shrink-0 items-center overflow-hidden border-b border-[#203048] bg-[#f0f0f0] pl-0.5 text-[21px] font-bold whitespace-nowrap text-[#202020]">
      <svg viewBox="0 0 20 20" className="mr-[3px] size-5">
        <rect x="1" y="1" width="18" height="18" rx="2" fill="#fff0c0" stroke="#f0a000" strokeWidth="2" />
        <rect x="5" y="5" width="10" height="10" fill="#f8b800" stroke="#d89000" strokeWidth="2" />
      </svg>
      {INDICES.map(([name, last, diff, pct, amt]) => (
        <div key={name} className="mr-6 flex items-center">
          <span className="mr-[7px] text-[23px] font-light">{name}</span>
          <span className="mr-[26px] text-[#ff0000]">{last}</span>
          <span className="mr-[23px] text-[#ff0000]">{diff}</span>
          <span className="mr-[27px] text-[#ff0000]">{pct}</span>
          <span>{amt}</span>
          <span className="text-[23px] font-light">亿</span>
        </div>
      ))}
      <div className="flex h-[30px] items-center border-l-2 border-[#a0a0a0] pl-1">
        <span className="mr-[9px] text-[23px] font-light">总成交</span>
        <span>10766</span>
      </div>
    </footer>
  );
}

function SiteBanner() {
  return (
    <a href="#" className="absolute right-0 bottom-0 flex h-[81px] w-[800px] items-center bg-[#82aedb] pl-4 whitespace-nowrap">
      <span className="text-[56px] leading-none font-black text-[#18007e]">公式指标网</span>
      <svg viewBox="0 0 80 80" className="ml-6 size-20" fill="none">
        <path d="M6 38A34 34 0 0 1 31 7M49 7a34 34 0 0 1 25 31" stroke="#dc5a46" strokeWidth="9" />
        <path d="M74 42A34 34 0 0 1 34 74" stroke="#f0d246" strokeWidth="9" />
        <path d="M33 1h14l-2 16h10v22H25V17h10z" fill="#f0d246" />
        <path d="M25 42h30v6H44v2h11v6H44v2h9l3 8-11 4-4-16h-2l-4 16-11-4 3-8h9v-2H25v-6h11v-2H25z" fill="#f0d246" />
        <circle cx="40" cy="7" r="3" fill="#82aedb" />
        <path d="M25 28h9M36 39V28h3M46 27v11M46 27h-6" stroke="#82aedb" strokeWidth="2" />
        <path id="ring" d="M2 40A38 38 0 0 0 40 78" />
        <text fontSize="8" fill="#fff" fontWeight="bold"><textPath href="#ring">www.9m8.cn</textPath></text>
      </svg>
      <span className="ml-6 pb-1 font-['DejaVu_Serif',serif] text-[52px] leading-none font-bold text-white [-webkit-text-stroke:2px_#fff]">www.9m8.cn</span>
    </a>
  );
}

export default function App() {
  return (
    <div className="relative flex h-screen flex-col overflow-hidden bg-black font-['Liberation_Sans','Noto_Sans_CJK_SC',sans-serif] text-[18px] text-[#c0c0c0]">
      <TitleBar />
      <main className="flex min-h-0 flex-1">
        <div className="flex min-w-0 flex-1 flex-col">
          <PeriodBar />
          <PriceChart />
          <TrendChart />
          <ObvChart />
          <DateAxis />
          <BottomTabs />
        </div>
        <QuotePanel />
        <SideBar />
      </main>
      <StatusBar />
      <SiteBanner />
    </div>
  );
}
